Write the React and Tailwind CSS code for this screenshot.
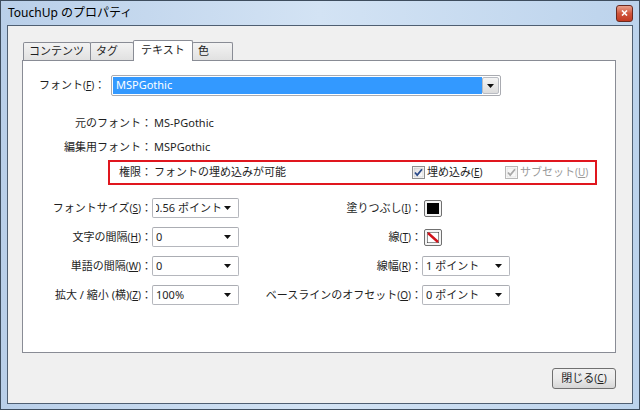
import React from 'react';

const Arrow = () => (
  <svg width="7" height="4" viewBox="0 0 7 4" className="shrink-0">
    <path d="M0 0h7L3.5 4z" fill="#111" />
  </svg>
);

const Select = ({ value, width, shift = 0 }) => (
  <div
    className={`${width} h-[20px] flex items-center border border-[#b5b7bd] border-t-[#abadb3] bg-white rounded-[2px] pl-[3px] pr-[7px]`}
  >
    <div className="flex-1 overflow-hidden whitespace-nowrap">
      <span className={shift ? 'inline-block -ml-[9px]' : 'inline-block'}>{value}</span>
    </div>
    <Arrow />
  </div>
);

const Check = ({ disabled }) => (
  <svg width="13" height="13" viewBox="0 0 13 13" className="shrink-0">
    <defs>
      <linearGradient id={disabled ? 'cbd' : 'cb'} x1="0" y1="0" x2="1" y2="1">
        <stop offset="0" stopColor={disabled ? '#f4f4f4' : '#dcdcdc'} />
        <stop offset="1" stopColor={disabled ? '#fbfbfb' : '#ffffff'} />
      </linearGradient>
    </defs>
    <rect x="0.5" y="0.5" width="12" height="12" fill="#fff" stroke={disabled ? '#b8b8b8' : '#8e8f8f'} />
    <rect x="2" y="2" width="9" height="9" fill={`url(#${disabled ? 'cbd' : 'cb'})`} stroke={disabled ? '#d8d8d8' : '#c4c4c4'} strokeWidth="0.6" />
    <path
      d="M3 6.5l2.2 2.5L10 3.2"
      fill="none"
      stroke={disabled ? '#a8a8a8' : '#2a4a8a'}
      strokeWidth="1.8"
    />
  </svg>
);

const Mn = ({ k }) => (
  <span className="text-[10px]">
    (<u>{k}</u>)
  </span>
);

const Tab = ({ label, w, active }) =>
  active ? (
    <div
      className={`${w} h-[21px] -mb-px -ml-px relative z-10 border border-b-0 border-[#898c95] bg-white rounded-t-[2px] flex items-start pt-[1px] pl-[7px]`}
    >
      {label}
    </div>
  ) : (
    <div
      className={`${w} h-[18px] mt-[2px] -ml-px first:ml-0 border border-b-0 border-[#898c95] bg-gradient-to-b from-[#f3f3f3] to-[#e1e1e1] rounded-t-[2px] flex items-center pl-[5px]`}
    >
      {label}
    </div>
  );

export default function App() {
  return (
    <div className="w-[640px] h-[410px] flex flex-col border border-[#3e4d5e] bg-gradient-to-r from-[#b9cfe9] via-[#d3e3f4] to-[#bcd3ec] font-['Noto_Sans','Noto_Sans_CJK_JP',sans-serif] text-[11px] text-[#1e1e1e] overflow-hidden">
      {/* title bar */}
      <div className="h-[24px] shrink-0 flex items-center justify-between pl-[7px] pr-[6px]">
        <span className="text-[12px] text-black">TouchUp のプロパティ</span>
        <div className="w-[17px] h-[17px] rounded-[3px] border border-[#6b2a20] bg-gradient-to-b from-[#e8a08c] via-[#d0553c] to-[#c23a22] flex items-center justify-center">
          <svg width="7" height="6" viewBox="0 0 7 6">
            <path d="M1 0.5l5 5M6 0.5l-5 5" stroke="#fff" strokeWidth="1.6" />
          </svg>
        </div>
      </div>

      {/* client area */}
      <div className="flex-1 mx-[6px] mb-[5px] border border-[#4f5f72] bg-[#f0f0f0] flex flex-col pl-[14px] pr-[15px] pt-[14px]">
        <div className="flex items-end pl-[1px] h-[20px]">
          <Tab label="コンテンツ" w="w-[68px]" />
          <Tab label="タグ" w="w-[44px]" />
          <Tab label="テキスト" w="w-[60px]" active />
          <Tab label="色" w="w-[41px]" />
        </div>

        <div className="w-[594px] h-[293px] border border-[#898c95] bg-white flex flex-col">
          {/* font row */}
          <div className="flex items-center mt-[14px] pl-[16px]">
            <div className="w-[72px]">
              フォント<Mn k="F" />：
            </div>
            <div className="w-[390px] h-[21px] border border-[#a9abb1] rounded-[2px] flex items-stretch p-[1px] bg-white">
              <div className="flex-1 bg-[#3399ff] text-white flex items-center pl-[3px]">MSPGothic</div>
              <div className="w-[17px] border border-[#b9bcc3] rounded-[2px] bg-gradient-to-b from-[#f4f4f4] to-[#dcdcdc] flex items-center justify-center">
                <Arrow />
              </div>
            </div>
          </div>

          {/* info rows */}
          <div className="flex items-center h-[24px] mt-[15px]">
            <div className="w-[129px] text-right">元のフォント：</div>
            <div className="pl-[2px]">MS-PGothic</div>
          </div>
          <div className="flex items-center h-[24px]">
            <div className="w-[129px] text-right">編集用フォント：</div>
            <div className="pl-[2px]">MSPGothic</div>
          </div>

          {/* permission box */}
          <div className="ml-[85px] mt-[1px] w-[489px] h-[25px] border-2 border-[#e0161e] flex items-center">
            <div className="w-[42px] text-right">権限：</div>
            <div className="w-[260px] pl-[2px]">フォントの埋め込みが可能</div>
            <div className="w-[93px] flex items-center gap-[2px]">
              <Check />
              <span>
                埋め込み<Mn k="E" />
              </span>
            </div>
            <div className="flex items-center gap-[2px] text-[#9a9a9a]">
              <Check disabled />
              <span>
                サブセット<Mn k="U" />
              </span>
            </div>
          </div>

          {/* property grid */}
          <div className="mt-[13px] flex flex-col gap-[9px]">
            <div className="flex items-center h-[20px]">
              <div className="w-[129px] text-right">
                フォントサイズ<Mn k="S" />：
              </div>
              <Select value="10.56 ポイント" width="w-[87px]" shift />
              <div className="w-[183px] text-right">
                塗りつぶし<Mn k="I" />：
              </div>
              <div className="ml-[2px] w-[18px] h-[17px] rounded-[2px] border border-[#707070] bg-[#f4f4f4] flex items-center justify-center">
                <div className="w-[12px] h-[11px] bg-black" />
              </div>
            </div>
            <div className="flex items-center h-[20px]">
              <div className="w-[129px] text-right">
                文字の間隔<Mn k="H" />：
              </div>
              <Select value="0" width="w-[87px]" />
              <div className="w-[183px] text-right">
                線<Mn k="T" />：
              </div>
              <div className="ml-[2px] w-[18px] h-[17px] rounded-[2px] border border-[#707070] bg-[#f4f4f4] flex items-center justify-center">
                <svg width="12" height="11" viewBox="0 0 12 11">
                  <rect x="0" y="0" width="12" height="11" fill="#fff" stroke="#222" strokeWidth="1" />
                  <path d="M1 1l10 9" stroke="#d0121b" strokeWidth="2.4" />
                </svg>
              </div>
            </div>
            <div className="flex items-center h-[20px]">
              <div className="w-[129px] text-right">
                単語の間隔<Mn k="W" />：
              </div>
              <Select value="0" width="w-[87px]" />
              <div className="w-[183px] text-right">
                線幅<Mn k="R" />：
              </div>
              <Select value="1 ポイント" width="w-[88px]" />
            </div>
            <div className="flex items-center h-[20px]">
              <div className="w-[129px] text-right">
                拡大 / 縮小 (横)<Mn k="Z" />：
              </div>
              <Select value="100%" width="w-[87px]" />
              <div className="w-[183px] text-right">
                ベースラインのオフセット<Mn k="O" />：
              </div>
              <Select value="0 ポイント" width="w-[88px]" />
            </div>
          </div>
        </div>

        {/* footer */}
        <div className="flex justify-end mt-[15px] pr-[1px]">
          <div className="w-[64px] h-[21px] rounded-[3px] border border-[#707070] bg-gradient-to-b from-[#f2f2f2] via-[#ebebeb] to-[#d6d6d6] flex items-center justify-center">
            閉じる<Mn k="C" />
          </div>
        </div>
      </div>
    </div>
  );
}
